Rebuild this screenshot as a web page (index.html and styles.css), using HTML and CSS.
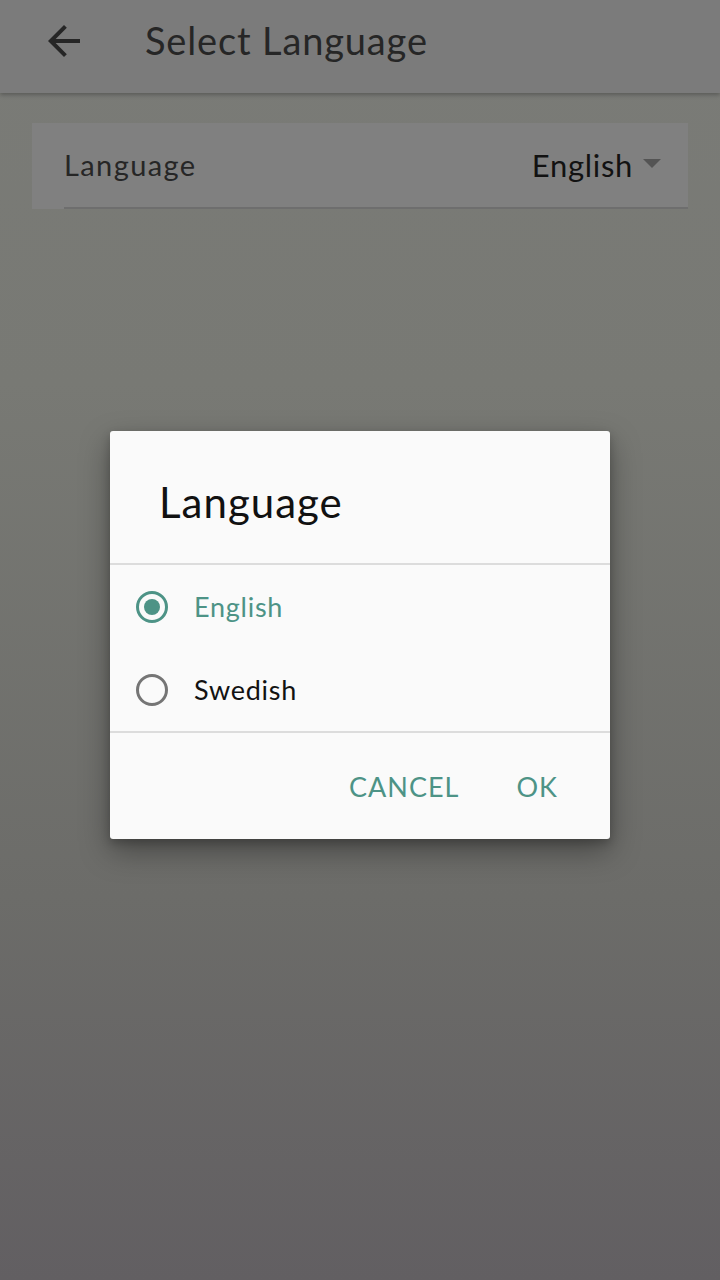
FILE: index.html
```html
<!DOCTYPE html>
<html>
<head>
<meta charset="utf-8">
<link rel="stylesheet" href="styles.css">
</head>
<body>
<div class="screen">
  <header class="appbar">
    <svg class="back" viewBox="0 0 24 24" width="48" height="48"><path d="M20 11H7.83l5.59-5.59L12 4l-8 8 8 8 1.41-1.41L7.83 13H20v-2z" fill="#262626"/></svg>
    <h1 class="title">Select Language</h1>
  </header>
  <main class="content">
    <div class="card">
      <span class="label">Language</span>
      <span class="value">English<span class="caret"></span></span>
    </div>
  </main>
</div>
<div class="scrim">
  <div class="dialog">
    <div class="dlg-title">Language</div>
    <div class="dlg-list">
      <div class="option selected"><span class="radio"></span><span>English</span></div>
      <div class="option"><span class="radio"></span><span>Swedish</span></div>
    </div>
    <div class="dlg-actions">
      <span class="btn">CANCEL</span>
      <span class="btn">OK</span>
    </div>
  </div>
</div>
</body>
</html>
```
FILE: styles.css
```css
html, body {
  margin: 0;
  padding: 0;
}
body {
  width: 720px;
  height: 1280px;
  overflow: hidden;
  font-family: Lato, "Liberation Sans", sans-serif;
  background: linear-gradient(180deg, #7a7b77 0%, #787974 30%, #6c6c69 70%, #625f62 100%);
}
.screen {
  display: flex;
  flex-direction: column;
  height: 1280px;
}
.appbar {
  height: 93px;
  background: #7b7b7b;
  display: flex;
  align-items: center;
  box-shadow: 0 2px 4px rgba(0,0,0,0.25);
  position: relative;
  z-index: 1;
}
.back {
  margin-left: 40px;
  margin-top: -12px;
}
.title {
  margin: -13px 0 0 57px;
  font-size: 38px;
  font-weight: 400;
  letter-spacing: 0.85px;
  color: #262626;
}
.content {
  padding: 30px 32px 0 32px;
}
.card {
  height: 86px;
  background: #808080;
  display: flex;
  align-items: center;
  justify-content: space-between;
  padding: 0 27px 0 32px;
  position: relative;
}
.card::after {
  content: "";
  position: absolute;
  left: 32px;
  right: 0;
  bottom: 0;
  height: 2px;
  background: #6e6e6e;
}
.label {
  font-size: 29px;
  letter-spacing: 1.4px;
  color: #262626;
  margin-top: -3px;
}
.value {
  font-size: 31px;
  letter-spacing: 0.7px;
  color: #121212;
  display: flex;
  align-items: center;
  margin-top: -2px;
}
.caret {
  width: 0;
  height: 0;
  border-left: 9px solid transparent;
  border-right: 9px solid transparent;
  border-top: 9px solid #545454;
  margin-left: 10px;
  margin-top: -4px;
}
.scrim {
  position: absolute;
  left: 0;
  top: 0;
  width: 720px;
  height: 1280px;
  display: flex;
  justify-content: center;
  align-items: flex-start;
}
.dialog {
  margin-top: 431px;
  width: 500px;
  background: #fafafa;
  border-radius: 3px;
  box-shadow: 0 12px 30px rgba(0,0,0,0.35), 0 4px 10px rgba(0,0,0,0.2);
}
.dlg-title {
  height: 134px;
  box-sizing: border-box;
  padding: 46px 0 0 49px;
  font-size: 42px;
  letter-spacing: 1px;
  color: #111;
  border-bottom: 2px solid #dcdcdc;
}
.dlg-list {
  height: 166px;
  display: flex;
  flex-direction: column;
  justify-content: center;
  border-bottom: 2px solid #dcdcdc;
}
.option {
  height: 83px;
  display: flex;
  align-items: center;
  padding-left: 26px;
  font-size: 27px;
  letter-spacing: 0.75px;
  color: #121212;
}
.option.selected {
  color: #4d9386;
}
.radio {
  width: 32px;
  height: 32px;
  box-sizing: border-box;
  border: 3px solid #757575;
  border-radius: 50%;
  margin-right: 26px;
  position: relative;
}
.selected .radio {
  border-color: #4d9386;
}
.selected .radio::after {
  content: "";
  position: absolute;
  left: 5px;
  top: 5px;
  width: 16px;
  height: 16px;
  border-radius: 50%;
  background: #4d9386;
}
.dlg-actions {
  height: 106px;
  display: flex;
  justify-content: flex-end;
  align-items: center;
  padding-right: 52px;
  gap: 57px;
}
.btn {
  font-size: 27px;
  color: #4d9386;
  letter-spacing: 1px;
}
```
